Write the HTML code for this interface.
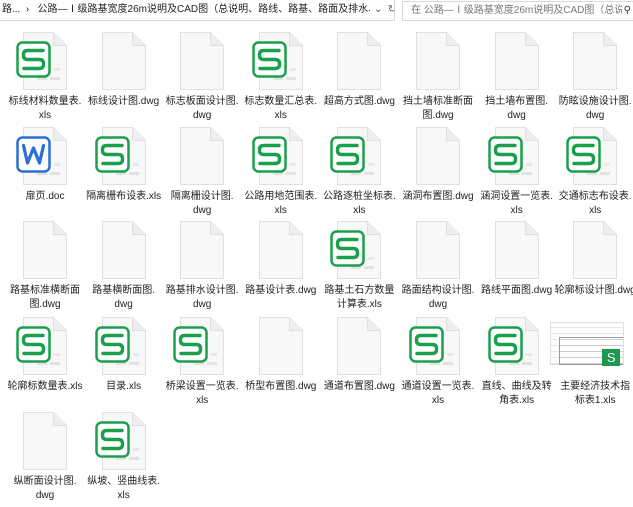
<!DOCTYPE html>
<html><head><meta charset="utf-8"><style>
*{margin:0;padding:0;box-sizing:border-box}
body{width:633px;height:500px;background:#fff;overflow:hidden;position:relative;font-family:"Liberation Sans","Noto Sans CJK SC",sans-serif;color:#1a1a1a}
.bar{position:absolute;top:0;height:21px;border:1px solid #d9d9d9;border-top:none;font-size:10px;line-height:19px;color:#222;white-space:nowrap;overflow:hidden}
.it{position:absolute;width:78px;height:95px}
.pg{position:absolute;left:22px;top:0;width:44px;height:58px}
.lb{position:absolute;left:0;top:63px;width:88px;font-size:10px;line-height:14px;text-align:center;color:#222;white-space:nowrap}
.sq{position:absolute;left:15px;top:9px;width:35px;height:37px}
</style></head><body>
<div class="bar" style="left:-1px;width:396px;padding-left:2px">路... &nbsp;›&nbsp;&nbsp; 公路—Ⅰ级路基宽度26m说明及CAD图（总说明、路线、路基、路面及排水、桥梁...<span style="position:absolute;left:370px;top:0;background:#fff;color:#555;padding-left:4px">⌄&nbsp;&nbsp;↻</span></div>
<div class="bar" style="left:402px;width:232px;padding-left:8px;color:#777;border-top:1px solid #d9d9d9;top:1px;height:20px;line-height:18px">在 公路—Ⅰ级路基宽度26m说明及CAD图（总说明、路... <span style="position:absolute;right:0;top:0;background:#fff;color:#333;padding:0 2px">⚲</span></div>
<div id="g"></div>
<script>
var P='<svg class="pg" viewBox="0 0 44 58"><path d="M0.5 0.5H30.5L43.5 13.5V57.5H0.5Z" fill="#f8f8f8" stroke="#e0e0e0"/><path d="M30.5 0.5V13.5H43.5" fill="#eeeeee" stroke="#e0e0e0"/>';
var S='<svg class="sq" viewBox="0 0 35 37"><rect x="1.5" y="1.5" width="32" height="34" rx="5" fill="#fff" stroke="#1aa04c" stroke-width="2.5"/><path d="M27 9.5H12Q7.5 9.5 7.5 13.5V14.5Q7.5 18.5 12 18.5H23Q27.5 18.5 27.5 22.5V23.5Q27.5 27.5 23 27.5H8" fill="none" stroke="#1aa04c" stroke-width="3.4" stroke-linecap="round"/></svg>';
var W='<svg class="sq" viewBox="0 0 35 37"><rect x="1.5" y="1.5" width="32" height="34" rx="5" fill="#fff" stroke="#2b6fd6" stroke-width="2.5"/><path d="M7.5 9.5L11.5 27L17.5 12L23.5 27L27.5 9.5" fill="none" stroke="#2b6fd6" stroke-width="3.2" stroke-linejoin="round" stroke-linecap="round"/></svg>';
var L=[
['标线材料数量表.<br>xls','s'],['标线设计图.dwg'],['标志板面设计图.<br>dwg'],['标志数量汇总表.<br>xls','s'],['超高方式图.dwg'],['挡土墙标准断面<br>图.dwg'],['挡土墙布置图.<br>dwg'],['防眩设施设计图.<br>dwg'],
['扉页.doc','w'],['隔离栅布设表.xls','s'],['隔离栅设计图.<br>dwg'],['公路用地范围表.<br>xls','s'],['公路逐桩坐标表.<br>xls','s'],['涵洞布置图.dwg'],['涵洞设置一览表.<br>xls','s'],['交通标志布设表.<br>xls','s'],
['路基标准横断面<br>图.dwg'],['路基横断面图.<br>dwg'],['路基排水设计图.<br>dwg'],['路基设计表.dwg'],['路基土石方数量<br>计算表.xls','s'],['路面结构设计图.<br>dwg'],['路线平面图.dwg'],['轮廓标设计图.dwg'],
['轮廓标数量表.xls','s'],['目录.xls','s'],['桥梁设置一览表.<br>xls','s'],['桥型布置图.dwg'],['通道布置图.dwg'],['通道设置一览表.<br>xls','s'],['直线、曲线及转<br>角表.xls','s'],['主要经济技术指<br>标表1.xls','t'],
['纵断面设计图.<br>dwg'],['纵坡、竖曲线表.<br>xls','s']];
var rows=[32,127,221,317,412],h='';
L.forEach(function(a,i){var r=Math.floor(i/8),c=i%8,x=1+78.6*c,y=rows[r];
var t=a[1],s='<div class="it" style="left:'+x+'px;top:'+y+'px">';
if(t=='t'){s+='<div style="position:absolute;left:-1px;top:5px;width:74px;height:43px;border:1px solid #ddd;background:#fff;background-image:repeating-linear-gradient(0deg,#e6e6e6 0 1px,transparent 1px 6px)"><div style="position:absolute;left:8px;top:14px;width:64px;height:28px;border:1px solid #999;border-right:none;background:repeating-linear-gradient(0deg,#ccc 0 1px,transparent 1px 6px)"></div><div style="position:absolute;left:51px;top:26px;width:18px;height:17px;background:#1d9a4e;color:#fff;font:13px/17px Liberation Sans,sans-serif;text-align:center">S</div></div>';}
else{s+=P+(t=='s'||t=='w'?'<rect x="14" y="45" width="10" height="3" fill="#e2e2e2"/><rect x="27" y="45" width="10" height="3" fill="#e2e2e2"/><rect x="31" y="36" width="6" height="3" fill="#e8e8e8"/>':'')+'</svg>';
if(t=='s')s+=S;
if(t=='w')s+=W;}
s+='<div class="lb">'+a[0]+'</div></div>';h+=s;});
document.getElementById('g').innerHTML=h;
</script>
</body></html>
